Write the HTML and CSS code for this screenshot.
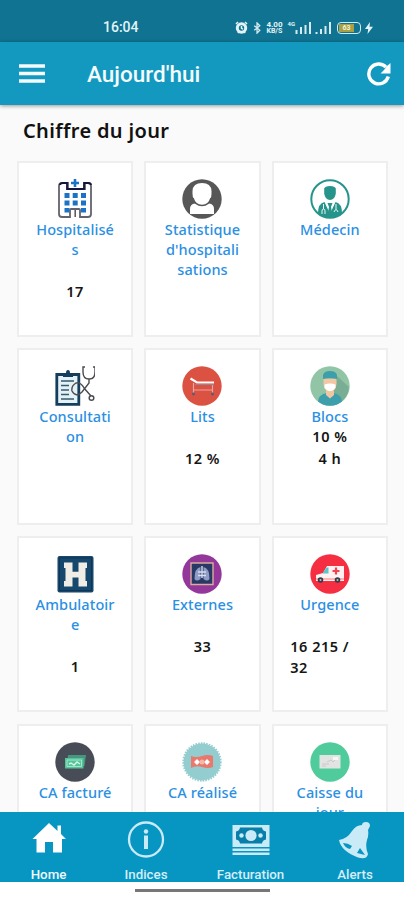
FILE: index.html
```
<!DOCTYPE html>
<html lang="fr">
<head>
  <meta charset="UTF-8" />
  <meta name="viewport" content="width=device-width, initial-scale=1" />
  <title>Aujourd'hui</title>
  <link rel="stylesheet" href="styles.css">
</head>
<body>

  <div class="status-bar">
    <span class="clock">16:04</span>
    <div class="status-icons">
      <svg class="alarm" width="13" height="13" viewBox="0 0 13 13">
        <circle cx="6.5" cy="7" r="4.2" fill="none" stroke="#e3f3f7" stroke-width="3"/>
        <path d="M1 3l2-2M12 3l-2-2M2.8 12l1-1M10.2 12l-1-1M6.5 5v2.3l1.5.8" stroke="#e3f3f7" stroke-width="1.5" fill="none"/>
      </svg>
      <svg class="bluetooth" width="9" height="12" viewBox="0 0 9 13">
        <path d="M1 4l6 5-3 3V1l3 3-6 5" fill="none" stroke="#d5ebf1" stroke-width="1.4"/>
      </svg>
      <div class="speed"><span>4.00</span><span>KB/S</span></div>
      <span class="network">4G</span>
      <svg class="signal" width="16" height="12" viewBox="0 0 16 12">
        <path d="M1.5 12V8M6 12V5M10.500 12V3M15 12V0" stroke="#d5ebf1" stroke-width="2" fill="none"/>
      </svg>
      <svg class="signal signal-2" width="17" height="12" viewBox="0 0 17 12">
        <path d="M1.500 12v-2M6 12V7M10.500 12V4M15 12V0" stroke="#d5ebf1" stroke-width="2" fill="none"/>
      </svg>
      <div class="battery"><div class="battery-level">63</div></div>
      <svg class="bolt" width="8" height="12" viewBox="0 0 8 12">
        <path d="M5 0L0 7h3.200L2.500 12 8 4.700H4.500z" fill="#e3f3f7"/>
      </svg>
    </div>
  </div>

  <header class="app-bar">
    <svg class="menu" width="26" height="19" viewBox="0 0 26 19">
      <path d="M0 2h26M0 9.500h26M0 17h26" stroke="#f3fbfd" stroke-width="3.600"/>
    </svg>
    <h1>Aujourd'hui</h1>
    <svg class="refresh" width="24" height="24" viewBox="0 0 24 24">
      <path d="M21.300 14.500A9.900 9.900 0 1 1 19 5.200" fill="none" stroke="#fff" stroke-width="3.400"/>
      <path d="M23.500 1v10.500H13.500L17 8l3-4z" fill="#fff"/>
    </svg>
  </header>

  <main>
    <h2>Chiffre du jour</h2>

    <div class="cards">
      <div class="card">
        <svg class="icon" viewBox="0 0 40 40">
          <path d="M10 4H7Q4 4 4 7v28q0 3 3 3h8v-7q0-1 1-1h8q1 0 1 1v7h8q3 0 3-3V7q0-3-3-3h-3v6H13V4z" fill="#fff" stroke="#63636d" stroke-width="1.800"/>
          <path d="M5 6q0-2 3-2h4v6h17V4h4q3 0 3 2" fill="none" stroke="#15153c" stroke-width="1.800"/>
          <path d="M20 0v8M16 4h8" stroke="#1c72c4" stroke-width="2.600"/>
          <path d="M9.500 14h5v5h-5zM17.700 14h5v5h-5zM26 14h5v5h-5zM9.500 21.500h5v5h-5zM17.700 21.500h5v5h-5zM26 21.500h5v5h-5zM9.500 29h5v4.500h-5zM26 29h5v4.500h-5z" fill="#1c72c4"/>
          <path d="M20.200 31v7" stroke="#555" stroke-width="1.500"/>
        </svg>
        <div class="label">Hospitalisés</div>
        <div class="value late">17</div>
      </div>

      <div class="card">
        <svg class="icon" viewBox="0 0 40 40">
          <circle cx="20" cy="20" r="19.700" fill="#575757"/>
          <path d="M8 35v-5q0-5 5-5.500h14q5 .5 5 5.500v5z" fill="#fff"/>
          <path d="M10.500 12Q11 4 20 4t9.500 8q.5 14-9.500 14T10.500 12z" fill="#fff"/>
          <path d="M11 19q2 7.500 9 7.500t9-7.500" fill="none" stroke="#575757" stroke-width="1.500"/>
        </svg>
        <div class="label">Statistique d'hospitalisations</div>
      </div>

      <div class="card">
        <svg class="icon" viewBox="0 0 40 40">
          <circle cx="20" cy="20" r="18.700" fill="#fff" stroke="#26948b" stroke-width="2"/>
          <path d="M14.200 9.500Q15 7 20 7t5.800 2.500v5q-1 6.500-5.800 6.500t-5.800-6.500z" fill="#26948b"/>
          <path d="M8 34q0-9.500 6.500-11L20 35l5.500-12Q32 24.500 32 34q-5 5-12 5T8 34z" fill="#26948b"/>
          <path d="M17.500 24h5l-1.500 4 1 5-2 3-2-3 1-5z" fill="#26948b"/>
          <path d="M13.500 25v5M12 35v-3q0-2 1.500-2t1.500 2v3M26 25v5m-2 3q2-5 4 0" fill="none" stroke="#e6f7f5"/>
        </svg>
        <div class="label">Médecin</div>
      </div>

      <div class="card">
        <svg class="icon" viewBox="0 0 40 40">
          <path d="M1.800 8.500h22v29.800h-22z" fill="#e4f1f6" stroke="#153e5c" stroke-width="2.800"/>
          <path d="M8 7h3q0-3 2-3t2 3h3v4H8z" fill="#153e5c"/>
          <path d="M6 15h13M6 19.500h8M6 24h8M6 28.500h8M6 33h13" stroke="#355b6d" stroke-width="1.300"/>
          <path d="M30 1h-2v5q0 7 6 7t6-7V1h-2M34 13v4l-7 9q-6 6-10-1-1-5 4-8 5-1 8 5l7 8" fill="none" stroke="#4b4b50" stroke-width="1.400"/>
          <circle cx="36.500" cy="32" r="2.300" fill="#fff" stroke="#4b4b50" stroke-width="1.500"/>
        </svg>
        <div class="label">Consultation</div>
      </div>

      <div class="card">
        <svg class="icon" viewBox="0 0 40 40">
          <circle cx="20" cy="20" r="19.700" fill="#db5142"/>
          <path d="M8.500 12.500l6.500 4h17" fill="none" stroke="#fff" stroke-width="2.200"/>
          <path d="M11.500 17v10M30.500 18v9M11 24h20" fill="none" stroke="#eaa39d" stroke-width="1.200"/>
          <path d="M13 18.500h19" stroke="#a77c84" stroke-width="1.200"/>
          <circle cx="11.500" cy="28" r="1.400" fill="#555d70"/>
          <circle cx="30.500" cy="28" r="1.400" fill="#555d70"/>
        </svg>
        <div class="label">Lits</div>
        <div class="value late">12 %</div>
      </div>

      <div class="card">
        <svg class="icon" viewBox="0 0 40 40">
          <circle cx="20" cy="20" r="19.700" fill="#91c5a5"/>
          <path d="M27 10l12 11q-1 11-9 15L20 27z" fill="#7aae94"/>
          <path d="M8 35.500q0-7 9-8.500h6q9 1.500 9 8.500-5 4.200-12 4.200T8 35.500z" fill="#3d9fac"/>
          <path d="M16 25h8v4l-4 3.500-4-3.500z" fill="#f1c6a3"/>
          <path d="M13.500 13h13v5q-1 8-6.500 8t-6.500-8z" fill="#f5c6a3"/>
          <path d="M14.500 18.500q5.500-2 11 0v3q-2 3.500-5.500 3.500t-5.500-3.500z" fill="#fff"/>
          <path d="M13 13V9q1-4 7-4t7 4v4q-7-2-14 0z" fill="#3d9fac"/>
        </svg>
        <div class="label">Blocs</div>
        <div class="value">10 %</div>
        <div class="value">4 h</div>
      </div>

      <div class="card">
        <svg class="icon" viewBox="0 0 40 40">
          <rect x="2.500" y="2" width="36" height="36.500" rx="2" fill="#16476c"/>
          <rect x="4.500" y="4" width="32" height="32.500" fill="none" stroke="#0e3555"/>
          <path d="M9 8.500h8.500v9.200h6V8.500H32V14h-1.500v13H32v5.500h-8.500v-9h-6v9H9V27h1.500V14H9z" fill="#efede5"/>
        </svg>
        <div class="label">Ambulatoire</div>
        <div class="value late">1</div>
      </div>

      <div class="card">
        <svg class="icon" viewBox="0 0 40 40">
          <circle cx="20" cy="20" r="19.700" fill="#93379b"/>
          <path d="M9 9h22v21.500H9z" fill="#293966" stroke="#d7ad9d" stroke-width="1.400"/>
          <path d="M18.500 13q-6 1-6 12 2 3 6 0zM21.500 13q6 1 6 12-2 3-6 0z" fill="#8f9cc4"/>
          <path d="M20 12v12M16 18h8M16 21.500h8" stroke="#d9def0" stroke-width="1.400"/>
        </svg>
        <div class="label">Externes</div>
        <div class="value late">33</div>
      </div>

      <div class="card">
        <svg class="icon" viewBox="0 0 40 40">
          <circle cx="20" cy="20" r="19.700" fill="#f52e42"/>
          <path d="M6 27v-6l7-2 4-7h17v15z" fill="#fff1ef"/>
          <path d="M12.500 19.500l4-6h2v6z" fill="#54c8cb"/>
          <path d="M6 25h28" stroke="#ee938f" stroke-width="1.200"/>
          <path d="M26 13.500v7M22.500 17h7" stroke="#f04456" stroke-width="2.200"/>
          <circle cx="10.500" cy="26" r="2.800" fill="#343b49"/>
          <circle cx="27.500" cy="26" r="2.800" fill="#343b49"/>
          <circle cx="10.500" cy="26" r="1" fill="#b9c0ca"/>
          <circle cx="27.500" cy="26" r="1" fill="#b9c0ca"/>
        </svg>
        <div class="label">Urgence</div>
        <div class="value late">16 215 / 32</div>
      </div>

      <div class="card">
        <svg class="icon" viewBox="0 0 40 40">
          <circle cx="20" cy="20" r="19.700" fill="#484c57"/>
          <path d="M13 13h18l-1.500 11H12z" fill="#45987e"/>
          <path d="M10 16h18.500v10.500H10z" fill="#55c49b"/>
          <path d="M12 18h14.500v6.500H12z" fill="none" stroke="#a2e3ca"/>
          <path d="M14 22l2-1 3 2 3-3 3 2" stroke="#d5f5e7" fill="none" stroke-width="1.400"/>
        </svg>
        <div class="label">CA facturé</div>
      </div>

      <div class="card">
        <svg class="icon" viewBox="0 0 40 40">
          <circle cx="20" cy="20" r="18.500" fill="#94cdcf"/>
          <circle cx="20" cy="20" r="18.700" fill="none" stroke="#94cdcf" stroke-width="2" stroke-dasharray="1.500 1.200"/>
          <path d="M9 14q5 2 11 0t11 0v11q-5 2-11 0t-11 1z" fill="#e9796c"/>
          <path d="M12 20l3-3 3 3-3 3zM22 20l3-3 3 3-3 3z" fill="#fff"/>
          <circle cx="20" cy="20" r="2.500" fill="#f6b6a8"/>
        </svg>
        <div class="label">CA réalisé</div>
      </div>

      <div class="card">
        <svg class="icon" viewBox="0 0 40 40">
          <circle cx="20" cy="20" r="19.700" fill="#4fcb9c"/>
          <path d="M9.500 13h21v13.500h-21z" fill="#e2e4e3"/>
          <path d="M12 22h7M12 24h4M17 20l4-2 2 2 4-4" fill="none" stroke="#c6cac8" stroke-width="1"/>
          <path d="M23 15h5v3h-5z" fill="#f7f7f7"/>
        </svg>
        <div class="label">Caisse du jour</div>
      </div>
    </div>
  </main>

  <nav class="tab-bar">
    <a class="tab active">
      <svg width="36" height="36" viewBox="0 0 36 36">
        <path d="M18 2L1.500 18H5.500v13.500h8.500V21h8v10.500h9V18h4l-5-5V4.500h-3.500V10z" fill="#fff"/>
      </svg>
      <span>Home</span>
    </a>
    <a class="tab">
      <svg width="38" height="38" viewBox="0 0 38 38">
        <circle cx="19" cy="18.500" r="17" fill="none" stroke="#c9eaf7" stroke-width="2.300"/>
        <path d="M19 14.500v13.500" stroke="#c9eaf7" stroke-width="4"/>
        <circle cx="19" cy="10.500" r="2.200" fill="#c9eaf7"/>
      </svg>
      <span>Indices</span>
    </a>
    <a class="tab">
      <svg width="38" height="38" viewBox="0 0 38 38">
        <path d="M.5 4h37v22H.5zM.5 27.500h37V30H.5zM.5 31.500h37v2.500H.5z" fill="#c9eaf7"/>
        <path d="M8 6.500h22q.5 3.500 4 4v8q-3.500.5-4 4H8q-.5-3.500-4-4v-8q3.500-.5 4-4z" fill="#087fa8"/>
        <circle cx="19" cy="14.500" r="5.600" fill="#c9eaf7"/>
        <circle cx="9.500" cy="14.500" r="2.200" fill="#c9eaf7"/>
        <circle cx="28.500" cy="14.500" r="2.200" fill="#c9eaf7"/>
      </svg>
      <span>Facturation</span>
    </a>
    <a class="tab">
      <svg width="36" height="38" viewBox="0 0 36 38">
        <path d="M2 19q8-1 13-9 4-6 10-6 0-3 4-3t4 4l-2 4q1 5-1 10-2 7 1 14-1 6-10 3.500Q4 30 2 19z" fill="#c9eaf7"/>
        <path d="M6 22q5 0 9 3l-2 3q-5-1-7-6zM20 32l3-5 5 7-4-1z" fill="#0795c2"/>
      </svg>
      <span>Alerts</span>
    </a>
  </nav>

  <div class="gesture-bar"><div class="handle"></div></div>

</body>
</html>
```
FILE: styles.css
```
* {
  box-sizing: border-box;
}

body {
  margin: 0;
  height: 900px;
  display: flex;
  flex-direction: column;
  overflow: hidden;
  background: #fafafa;
  font-family: "Noto Sans", sans-serif;
}

.status-bar {
  height: 42px;
  flex: none;
  display: flex;
  justify-content: space-between;
  padding: 12px 31px 0 103px;
  background: #0f7391;
  color: #e3f3f7;
}

.clock {
  font-family: Roboto, sans-serif;
  font-size: 14px;
  font-weight: 500;
  line-height: 31px;
}

.status-icons {
  display: flex;
  align-items: center;
  height: 31px;
}

.bluetooth {
  margin-left: 5px;
}

.speed {
  display: flex;
  flex-direction: column;
  margin-left: 4px;
  width: 19px;
  font: bold 8px/7px Roboto, sans-serif;
}

.speed span:last-child {
  font-size: 7px;
}

.network {
  align-self: flex-start;
  margin-left: 2px;
  padding-top: 9px;
  font: bold 6px/5px Roboto, sans-serif;
}

.signal-2 {
  margin-left: 4px;
}

.battery {
  margin-left: 5px;
  width: 24px;
  height: 12px;
  padding: 1px;
  border: 1px solid #d5ebf1;
  border-radius: 4px;
}

.battery-level {
  width: 15px;
  height: 8px;
  background: #a8a044;
  color: #f1f0d9;
  font: bold 7px/8px Roboto, sans-serif;
  text-align: center;
}

.bolt {
  margin-left: 4px;
}

.app-bar {
  height: 63px;
  flex: none;
  display: flex;
  align-items: center;
  padding: 0 13px 0 19px;
  background: #1398bf;
  box-shadow: 0 1px 4px rgba(0, 0, 0, 0.4);
  z-index: 1;
}

.app-bar h1 {
  margin: 1px auto 0 42px;
  color: #f3fbfd;
  font-family: Roboto, sans-serif;
  font-size: 22.5px;
  font-weight: 500;
}

main {
  flex: 1;
  min-height: 0;
  overflow: hidden;
  padding: 0 16px 0 17px;
}

h2 {
  margin: 0 6px;
  height: 55.5px;
  color: #111;
  font-size: 20px;
  font-weight: 600;
  line-height: 51px;
  letter-spacing: 0.35px;
}

.cards {
  display: grid;
  grid-template-columns: repeat(3, 1fr);
  grid-auto-rows: 176.5px;
  gap: 11.2px;
}

.card {
  display: flex;
  flex-direction: column;
  align-items: center;
  padding: 16px 16.5px 0;
  background: #fff;
  border: 2px solid #eee;
}

.icon {
  width: 40px;
  height: 40px;
  flex: none;
}

.label {
  width: 100%;
  color: #2b8fe3;
  font-size: 14.5px;
  font-weight: 500;
  line-height: 20px;
  letter-spacing: 0.1px;
  text-align: center;
  word-break: break-word;
}

.value {
  color: #151515;
  font-size: 14.5px;
  font-weight: 650;
  line-height: 21.5px;
  letter-spacing: 0.5px;
}

.late {
  margin-top: 22px;
}

.tab-bar {
  height: 70px;
  flex: none;
  display: grid;
  grid-template-columns: 97px 98px 111px 98px;
  background: #0795c2;
}

.tab {
  display: flex;
  flex-direction: column;
  align-items: center;
  justify-content: space-between;
  padding-top: 9px;
  color: #d5eef8;
  font: 500 13.3px/15px Roboto, sans-serif;
}

.tab.active {
  color: #f0fafd;
}

.gesture-bar {
  height: 18px;
  flex: none;
  padding-top: 7px;
  background: #fff;
}

.handle {
  width: 135px;
  height: 3px;
  margin: 0 auto;
  background: #777;
}
```
